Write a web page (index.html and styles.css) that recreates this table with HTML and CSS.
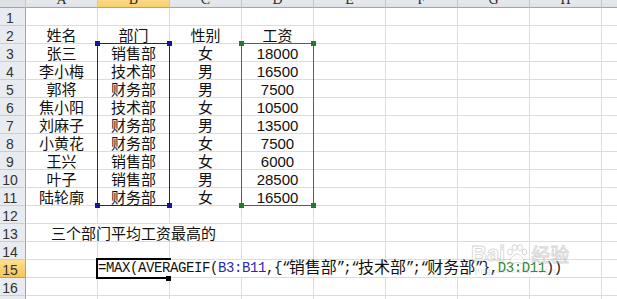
FILE: index.html
```html
<!DOCTYPE html>
<html lang="zh-CN">
<head>
<meta charset="utf-8">
<title>部门工资表</title>
<link rel="stylesheet" href="styles.css">
</head>
<body>
<div class="sheet">
  <div class="ch corner"></div>
  <div class="ch">A</div><div class="ch sel">B</div><div class="ch">C</div><div class="ch">D</div><div class="ch">E</div><div class="ch">F</div><div class="ch">G</div><div class="ch">H</div><div class="ch">I</div>

  <div class="rh">1</div>
  <div class="c"></div><div class="c"></div><div class="c"></div><div class="c"></div><div class="c"></div><div class="c"></div><div class="c"></div><div class="c"></div><div class="c"></div>

  <div class="rh">2</div>
  <div class="c">姓名</div><div class="c">部门</div><div class="c">性别</div><div class="c">工资</div><div class="c"></div><div class="c"></div><div class="c"></div><div class="c"></div><div class="c"></div>

  <div class="rh">3</div>
  <div class="c">张三</div><div class="c">销售部</div><div class="c">女</div><div class="c">18000</div><div class="c"></div><div class="c"></div><div class="c"></div><div class="c"></div><div class="c"></div>

  <div class="rh">4</div>
  <div class="c">李小梅</div><div class="c">技术部</div><div class="c">男</div><div class="c">16500</div><div class="c"></div><div class="c"></div><div class="c"></div><div class="c"></div><div class="c"></div>

  <div class="rh">5</div>
  <div class="c">郭将</div><div class="c">财务部</div><div class="c">男</div><div class="c">7500</div><div class="c"></div><div class="c"></div><div class="c"></div><div class="c"></div><div class="c"></div>

  <div class="rh">6</div>
  <div class="c">焦小阳</div><div class="c">技术部</div><div class="c">女</div><div class="c">10500</div><div class="c"></div><div class="c"></div><div class="c"></div><div class="c"></div><div class="c"></div>

  <div class="rh">7</div>
  <div class="c">刘麻子</div><div class="c">财务部</div><div class="c">男</div><div class="c">13500</div><div class="c"></div><div class="c"></div><div class="c"></div><div class="c"></div><div class="c"></div>

  <div class="rh">8</div>
  <div class="c">小黄花</div><div class="c">财务部</div><div class="c">女</div><div class="c">7500</div><div class="c"></div><div class="c"></div><div class="c"></div><div class="c"></div><div class="c"></div>

  <div class="rh">9</div>
  <div class="c">王兴</div><div class="c">销售部</div><div class="c">女</div><div class="c">6000</div><div class="c"></div><div class="c"></div><div class="c"></div><div class="c"></div><div class="c"></div>

  <div class="rh">10</div>
  <div class="c">叶子</div><div class="c">销售部</div><div class="c">男</div><div class="c">28500</div><div class="c"></div><div class="c"></div><div class="c"></div><div class="c"></div><div class="c"></div>

  <div class="rh">11</div>
  <div class="c">陆轮廓</div><div class="c">财务部</div><div class="c">女</div><div class="c">16500</div><div class="c"></div><div class="c"></div><div class="c"></div><div class="c"></div><div class="c"></div>

  <div class="rh">12</div>
  <div class="c"></div><div class="c"></div><div class="c"></div><div class="c"></div><div class="c"></div><div class="c"></div><div class="c"></div><div class="c"></div><div class="c"></div>

  <div class="rh">13</div>
  <div class="c note">三个部门平均工资最高的</div><div class="c"></div><div class="c"></div><div class="c"></div><div class="c"></div><div class="c"></div><div class="c"></div>

  <div class="rh">14</div>
  <div class="c"></div><div class="c"></div><div class="c"></div><div class="c"></div><div class="c"></div><div class="c"></div><div class="c"></div><div class="c"></div><div class="c"></div>

  <div class="rh sel">15</div>
  <div class="c"></div>
  <div class="c fx">=MAX(AVERAGEIF(<span class="rb">B3:B11</span>,{<span class="q">“</span><span class="z">销售部</span><span class="q">”</span>;<span class="q">“</span><span class="z">技术部</span><span class="q">”</span>;<span class="q">“</span><span class="z">财务部</span><span class="q">”</span>},<span class="rg">D3:D11</span>))</div>
  <div class="c"></div>

  <div class="rh">16</div>
  <div class="c"></div><div class="c"></div><div class="c"></div><div class="c"></div><div class="c"></div><div class="c"></div><div class="c"></div><div class="c"></div><div class="c"></div>

  <div class="rh">17</div>
  <div class="c"></div><div class="c"></div><div class="c"></div><div class="c"></div><div class="c"></div><div class="c"></div><div class="c"></div><div class="c"></div><div class="c"></div>

  <div class="layer">
    <div class="rng blue"><i class="h tl"></i><i class="h tr"></i><i class="h bl"></i><i class="h br"></i></div>
    <div class="rng green"><i class="h tl"></i><i class="h tr"></i><i class="h bl"></i><i class="h br"></i></div>
    <div class="active"><i class="fill"></i></div>
  </div>
</div>

<div class="wm" aria-hidden="true">
  <div class="wm-top">
    <span class="wm-bai">Bai</span>
    <svg class="paw" width="22" height="20" viewBox="0 0 22 20">
      <ellipse cx="4" cy="8" rx="2.4" ry="3" />
      <ellipse cx="8.5" cy="3.6" rx="2.4" ry="3" />
      <ellipse cx="14" cy="3.6" rx="2.4" ry="3" />
      <ellipse cx="18.4" cy="8" rx="2.4" ry="3" />
      <path d="M11 10c-3 0-7 4.5-7 7.2 0 2 1.6 2.4 3.2 2.1 1.4-.3 2.5-.8 3.8-.8s2.4.5 3.8.8c1.6.3 3.2-.1 3.2-2.1 0-2.7-4-7.2-7-7.2z" />
    </svg>
    <span class="wm-jy">经验</span>
  </div>
  <div class="wm-url">jingyan.baidu.com</div>
</div>
</body>
</html>
```

FILE: styles.css
```css
* { box-sizing: border-box; }

html, body {
  margin: 0;
  height: 100%;
}

body {
  background: #ffffff;
  overflow: hidden;
  position: relative;
  font-family: "Liberation Sans", "Noto Sans CJK SC", sans-serif;
}

.sheet {
  position: relative;
  display: grid;
  grid-template-columns: 26px repeat(9, 72px);
  grid-template-rows: 20px repeat(17, 18px);
  margin-top: -12px;
  width: max-content;
}

/* column headers */
.ch {
  background: linear-gradient(#f3f4f6, #dfe3e8);
  border-right: 1px solid #c3c8ce;
  border-bottom: 1px solid #9ea6b0;
  font: 14px/14px "Liberation Serif", serif;
  color: #2b2b2b;
  display: flex;
  align-items: flex-end;
  justify-content: center;
}
.ch.corner { background: #dde1e6; }
.ch.sel {
  background: linear-gradient(#fce9ad, #f7d06e);
  border-bottom-color: #c9a14a;
}

/* row headers */
.rh {
  background: #e8ebef;
  border-right: 1px solid #9ea6b0;
  border-bottom: 1px solid #c9ced4;
  font: 14px/16px "Liberation Sans", sans-serif;
  color: #333;
  text-align: center;
  padding: 2px 5px 0 0;
}
.rh.sel {
  background: linear-gradient(#fbdf92, #f5c65a);
  border-bottom-color: #c9a14a;
}

/* cells */
.c {
  border-right: 1px solid #dadcdd;
  border-bottom: 1px solid #dadcdd;
  background: #fff;
  font-size: 15px;
  line-height: 16px;
  padding-top: 2px;
  text-align: center;
  white-space: nowrap;
  color: #111;
}

.note {
  grid-column: span 3;
  text-align: left;
  padding-left: 25px;
}

.fx {
  grid-column: span 7;
  text-align: left;
  padding: 0;
  font: 14px/16px "Liberation Mono", monospace;
  letter-spacing: -0.4px;
  color: #111;
}
.fx .z {
  font: 16px/0 "Noto Sans CJK SC", sans-serif;
  letter-spacing: 0;
  vertical-align: -1px;
}
.fx .q { letter-spacing: -1.8px; }
.fx .rb { color: #2a2aa8; }
.fx .rg { color: #2e862e; }

/* overlay layer: range highlights and active cell */
.layer {
  position: absolute;
  inset: 0;
  display: grid;
  grid-template-columns: 26px repeat(9, 72px);
  grid-template-rows: 20px repeat(17, 18px);
  pointer-events: none;
}

.rng {
  position: relative;
  margin: -1px 0 0 -1px;
  border: 1px solid;
}
.rng.blue { grid-column: 3 / 4; grid-row: 4 / 13; border-color: #1e1e96; }
.rng.green { grid-column: 5 / 6; grid-row: 4 / 13; border-color: #2a7f2a; }

.h {
  position: absolute;
  width: 5px;
  height: 5px;
}
.blue .h { background: #1414a0; }
.green .h { background: #23782a; }
.h.tl { left: -3px; top: -3px; }
.h.tr { right: -3px; top: -3px; }
.h.bl { left: -3px; bottom: -3px; }
.h.br { right: -3px; bottom: -3px; }

.active {
  position: relative;
  grid-column: 3 / 4;
  grid-row: 16 / 17;
  margin: -2px -1px -1px -2px;
  border: 2px solid #000;
  border-right: 0;
}
.fill {
  position: absolute;
  right: 0;
  bottom: -4px;
  width: 5px;
  height: 5px;
  background: #000;
}

/* faint watermark */
.wm {
  position: absolute;
  left: 471px;
  top: 243px;
  pointer-events: none;
  color: rgba(255, 255, 255, 0.55);
  -webkit-text-stroke: 1px rgba(160, 160, 160, 0.42);
}
.wm-top {
  display: flex;
  align-items: center;
  gap: 1px;
}
.wm-bai {
  font: bold 22px/22px "Liberation Sans", sans-serif;
}
.paw {
  fill: rgba(255, 255, 255, 0.5);
  stroke: rgba(160, 160, 160, 0.42);
  stroke-width: 1;
}
.wm-jy {
  font: 19px/22px "Noto Sans CJK SC", sans-serif;
  margin-left: 2px;
}
.wm-url {
  font: 8px/8px "Liberation Sans", sans-serif;
  -webkit-text-stroke: 0;
  color: rgba(150, 150, 150, 0.35);
  margin-top: 2px;
  padding-left: 4px;
  letter-spacing: 1px;
}
```
